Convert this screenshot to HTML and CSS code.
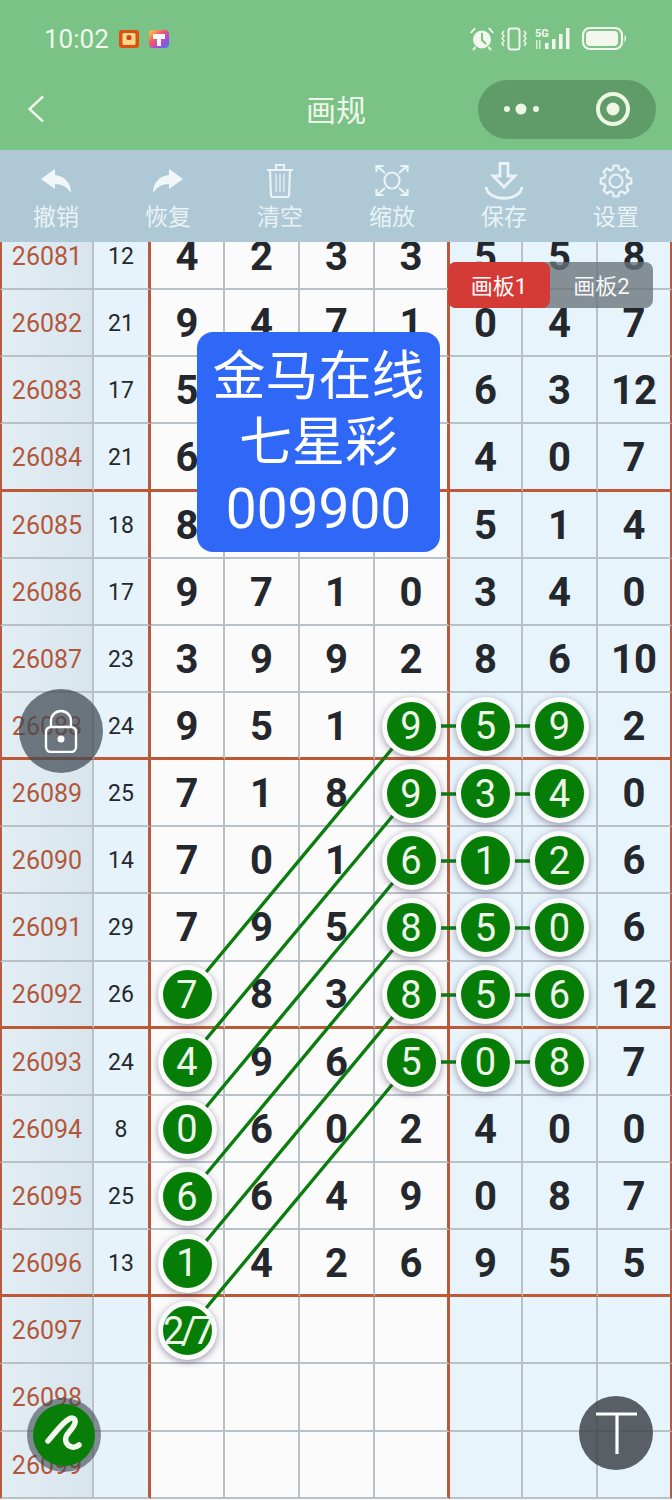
FILE: index.html
```html
<!DOCTYPE html>
<html lang="zh-CN">
<head>
<meta charset="utf-8">
<title>画规</title>
<link rel="stylesheet" href="styles.css">
</head>
<body>
<div class="phone">
  <header class="header">
    <div class="status">
      <span class="time">10:02</span>
      <svg class="app-icon" viewBox="0 0 20 18"><rect width="20" height="18" rx="3" fill="#de4f10"/><rect x="3.5" y="3" width="13" height="12" rx="1.5" fill="#f7d98c"/><circle cx="10" cy="7.5" r="2.6" fill="#d9401a"/></svg>
      <svg class="app-icon" viewBox="0 0 20 18"><defs><linearGradient id="rainbow" x1="0" y1="0" x2="1" y2="1"><stop offset="0" stop-color="#ffd23e"/><stop offset=".4" stop-color="#ef5a6a"/><stop offset=".7" stop-color="#a34be0"/><stop offset="1" stop-color="#3b7cf0"/></linearGradient></defs><rect width="20" height="18" rx="4" fill="url(#rainbow)"/><path d="M4 4h12v5h-4v7H8V9H4z" fill="#fff"/></svg>
      <svg class="status-icons" viewBox="0 0 160 30">
        <g fill="#f2f8ee">
          <circle cx="14" cy="15.5" r="9"/>
          <path d="M3.5 9.5 8 4.5l-1.5-1-4.500 5zM24.500 9.500 20 4.500l1.500-1 4.500 5z"/>
          <path d="M7.500 23 5 26M20.500 23 23 26" stroke="#f2f8ee" stroke-width="2"/>
        </g>
        <path d="M14 9v7l4 4" fill="none" stroke="#7ac285" stroke-width="2"/>
        <g fill="none" stroke="#f2f8ee" stroke-width="2">
          <rect x="40.500" y="4.500" width="11" height="21" rx="2.500"/>
          <path d="M36 7l-2 2.500 2 2.500-2 2.500 2 2.500-2 2.500 2 2.500M56 7l2 2.500-2 2.500 2 2.500-2 2.500 2 2.500-2 2.500" stroke-width="1.500"/>
        </g>
        <text class="five-g" x="67" y="13">5G</text>
        <g fill="#f2f8ee">
          <path d="M68 16h1.500v9H68zM71 16h1.500v9H71z" opacity=".8"/>
          <rect x="77" y="19" width="3.500" height="6"/>
          <rect x="84" y="15" width="3.500" height="10"/>
          <rect x="91" y="10" width="3.500" height="15"/>
          <rect x="98" y="4" width="3.500" height="21"/>
          <rect x="118" y="7" width="32" height="15" rx="4"/>
          <path d="M156.500 11c2 .5 2 6 0 7z"/>
        </g>
        <rect x="115" y="4" width="39" height="21" rx="7" fill="none" stroke="#f2f8ee" stroke-width="2.200"/>
      </svg>
    </div>
    <nav class="nav">
      <svg class="back" viewBox="0 0 18 28"><path d="M16 1.500 2.500 14 16 26.500" fill="none" stroke="#f0f7ea" stroke-width="2.400"/></svg>
      <h1 class="title">画规</h1>
      <div class="capsule">
        <svg class="capsule-dots" viewBox="0 0 40 14"><circle cx="5" cy="7" r="3" fill="#eef6e4"/><circle cx="19" cy="7" r="5.500" fill="#eef6e4"/><circle cx="34" cy="7" r="3" fill="#eef6e4"/></svg>
        <svg class="capsule-target" viewBox="0 0 36 36"><circle cx="18" cy="18" r="15" fill="none" stroke="#eef6e4" stroke-width="4"/><circle cx="18" cy="18" r="6.500" fill="#eef6e4"/></svg>
      </div>
    </nav>
  </header>

  <div class="toolbar">
    <div class="tool">
      <span class="tool-icon"><svg width="32" height="26" viewBox="0 0 32 26"><path class="solid" d="M1 11 15 1v6c10 1 16 8 16 18-4-6-9-9-16-9v5z"/></svg></span>
      <span class="tool-label">撤销</span>
    </div>
    <div class="tool">
      <span class="tool-icon"><svg width="32" height="26" viewBox="0 0 32 26"><path class="solid" d="M31 11 17 1v6C7 8 1 15 1 25c4-6 9-9 16-9v5z"/></svg></span>
      <span class="tool-label">恢复</span>
    </div>
    <div class="tool">
      <span class="tool-icon"><svg width="28" height="35" viewBox="0 0 28 35"><path class="line" d="M1 7h26M10 7V2h8v5M4 7l1 25.500c0 1 1 1.500 2 1.500h14c1 0 2-.5 2-1.500L24 7"/><path class="thin" d="M10 11v18M14 11v18M18 11v18"/></svg></span>
      <span class="tool-label">清空</span>
    </div>
    <div class="tool">
      <span class="tool-icon"><svg width="34" height="33" viewBox="0 0 34 33"><ellipse class="line" cx="17" cy="16.500" rx="7.500" ry="8"/><path class="line" d="M1.500 8V2h7M3 3l7 6M32.500 8V2h-7M31 3l-7 6M1.500 25v6h7M3 30l7-6M32.500 25v6h-7M31 30l-7-6"/></svg></span>
      <span class="tool-label">缩放</span>
    </div>
    <div class="tool">
      <span class="tool-icon"><svg width="40" height="38" viewBox="0 0 40 38"><path class="line line-bold" d="M16 1.500h8V14h7L20 25 9 14h7z"/><path class="line line-bold" d="M2 25c2 15 34 15 36 0"/></svg></span>
      <span class="tool-label">保存</span>
    </div>
    <div class="tool">
      <span class="tool-icon"><svg width="34" height="34" viewBox="-17 -17 34 34"><polygon class="line" points="11.54,-3.31 15.31,-2.42 15.31,2.42 11.54,3.31 10.5,5.82 12.54,9.11 9.11,12.54 5.82,10.5 3.31,11.54 2.42,15.31 -2.42,15.31 -3.31,11.54 -5.82,10.5 -9.11,12.54 -12.54,9.11 -10.5,5.82 -11.54,3.31 -15.31,2.42 -15.31,-2.42 -11.54,-3.31 -10.5,-5.82 -12.54,-9.11 -9.11,-12.54 -5.82,-10.5 -3.31,-11.54 -2.42,-15.31 2.42,-15.31 3.31,-11.54 5.82,-10.5 9.11,-12.54 12.54,-9.11 10.5,-5.82"/><circle class="line" r="6.500"/></svg></span>
      <span class="tool-label">设置</span>
    </div>
  </div>

  <main class="board">
    <div class="sheet">
      <svg class="links" viewBox="0 0 672 1276" aria-hidden="true">
        <path d="M187 772 411 503M187 839 411 571M187 907 411 638M187 974 411 705M187 1041 411 772M187 1108 411 839M411 503H560M411 571H560M411 638H560M411 705H560M411 772H560M411 839H560"/>
      </svg>
      <div class="row"><div class="cell">26081</div><div class="cell">12</div><div class="cell">4</div><div class="cell">2</div><div class="cell">3</div><div class="cell">3</div><div class="cell">5</div><div class="cell">5</div><div class="cell">8</div></div>
      <div class="row"><div class="cell">26082</div><div class="cell">21</div><div class="cell">9</div><div class="cell">4</div><div class="cell">7</div><div class="cell">1</div><div class="cell">0</div><div class="cell">4</div><div class="cell">7</div></div>
      <div class="row"><div class="cell">26083</div><div class="cell">17</div><div class="cell">5</div><div class="cell"></div><div class="cell"></div><div class="cell"></div><div class="cell">6</div><div class="cell">3</div><div class="cell">12</div></div>
      <div class="row row-edge"><div class="cell">26084</div><div class="cell">21</div><div class="cell">6</div><div class="cell"></div><div class="cell"></div><div class="cell"></div><div class="cell">4</div><div class="cell">0</div><div class="cell">7</div></div>
      <div class="row"><div class="cell">26085</div><div class="cell">18</div><div class="cell">8</div><div class="cell"></div><div class="cell"></div><div class="cell"></div><div class="cell">5</div><div class="cell">1</div><div class="cell">4</div></div>
      <div class="row"><div class="cell">26086</div><div class="cell">17</div><div class="cell">9</div><div class="cell">7</div><div class="cell">1</div><div class="cell">0</div><div class="cell">3</div><div class="cell">4</div><div class="cell">0</div></div>
      <div class="row"><div class="cell">26087</div><div class="cell">23</div><div class="cell">3</div><div class="cell">9</div><div class="cell">9</div><div class="cell">2</div><div class="cell">8</div><div class="cell">6</div><div class="cell">10</div></div>
      <div class="row row-edge"><div class="cell">26088</div><div class="cell">24</div><div class="cell">9</div><div class="cell">5</div><div class="cell">1</div><div class="cell"><span class="ball">9</span></div><div class="cell"><span class="ball">5</span></div><div class="cell"><span class="ball">9</span></div><div class="cell">2</div></div>
      <div class="row"><div class="cell">26089</div><div class="cell">25</div><div class="cell">7</div><div class="cell">1</div><div class="cell">8</div><div class="cell"><span class="ball">9</span></div><div class="cell"><span class="ball">3</span></div><div class="cell"><span class="ball">4</span></div><div class="cell">0</div></div>
      <div class="row"><div class="cell">26090</div><div class="cell">14</div><div class="cell">7</div><div class="cell">0</div><div class="cell">1</div><div class="cell"><span class="ball">6</span></div><div class="cell"><span class="ball">1</span></div><div class="cell"><span class="ball">2</span></div><div class="cell">6</div></div>
      <div class="row"><div class="cell">26091</div><div class="cell">29</div><div class="cell">7</div><div class="cell">9</div><div class="cell">5</div><div class="cell"><span class="ball">8</span></div><div class="cell"><span class="ball">5</span></div><div class="cell"><span class="ball">0</span></div><div class="cell">6</div></div>
      <div class="row row-edge"><div class="cell">26092</div><div class="cell">26</div><div class="cell"><span class="ball">7</span></div><div class="cell">8</div><div class="cell">3</div><div class="cell"><span class="ball">8</span></div><div class="cell"><span class="ball">5</span></div><div class="cell"><span class="ball">6</span></div><div class="cell">12</div></div>
      <div class="row"><div class="cell">26093</div><div class="cell">24</div><div class="cell"><span class="ball">4</span></div><div class="cell">9</div><div class="cell">6</div><div class="cell"><span class="ball">5</span></div><div class="cell"><span class="ball">0</span></div><div class="cell"><span class="ball">8</span></div><div class="cell">7</div></div>
      <div class="row"><div class="cell">26094</div><div class="cell">8</div><div class="cell"><span class="ball">0</span></div><div class="cell">6</div><div class="cell">0</div><div class="cell">2</div><div class="cell">4</div><div class="cell">0</div><div class="cell">0</div></div>
      <div class="row"><div class="cell">26095</div><div class="cell">25</div><div class="cell"><span class="ball">6</span></div><div class="cell">6</div><div class="cell">4</div><div class="cell">9</div><div class="cell">0</div><div class="cell">8</div><div class="cell">7</div></div>
      <div class="row row-edge"><div class="cell">26096</div><div class="cell">13</div><div class="cell"><span class="ball">1</span></div><div class="cell">4</div><div class="cell">2</div><div class="cell">6</div><div class="cell">9</div><div class="cell">5</div><div class="cell">5</div></div>
      <div class="row"><div class="cell">26097</div><div class="cell"></div><div class="cell"><span class="ball ball-tight">2/7</span></div><div class="cell"></div><div class="cell"></div><div class="cell"></div><div class="cell"></div><div class="cell"></div><div class="cell"></div></div>
      <div class="row"><div class="cell">26098</div><div class="cell"></div><div class="cell"></div><div class="cell"></div><div class="cell"></div><div class="cell"></div><div class="cell"></div><div class="cell"></div><div class="cell"></div></div>
      <div class="row"><div class="cell">26099</div><div class="cell"></div><div class="cell"></div><div class="cell"></div><div class="cell"></div><div class="cell"></div><div class="cell"></div><div class="cell"></div><div class="cell"></div></div>
    </div>
  </main>

  <div class="promo">金马在线<br>七星彩<br><span class="promo-num">009900</span></div>
  <div class="tabs"><span class="tab tab-on">画板1</span><span class="tab">画板2</span></div>
  <button class="fab fab-lock" aria-label="锁定"><svg width="34" height="44" viewBox="0 0 34 44"><path d="M7 18V12a10 10 0 0 1 20 0v6" fill="none" stroke="#fff" stroke-width="2.400"/><rect x="2" y="18" width="30" height="25" rx="5" fill="none" stroke="#fff" stroke-width="2.400"/><circle cx="17" cy="30" r="3.500" fill="#fff"/></svg></button>
  <button class="fab fab-pen" aria-label="画笔"><svg width="74" height="74" viewBox="0 0 74 74"><circle cx="37" cy="37" r="31" fill="#087d08"/><path d="M21 43C28 35 36 24 42 21 48 18 50 23 46 29 42 35 37 38 39 44 41 49 47 51 52 47" fill="none" stroke="#f2f8ee" stroke-width="5.500" stroke-linecap="round" stroke-linejoin="round"/></svg></button>
  <button class="fab fab-text" aria-label="文字"><svg width="74" height="74" viewBox="0 0 74 74"><path d="M17 18H58M38 18V58" fill="none" stroke="#fff" stroke-width="3.200"/></svg></button>
</div>
</body>
</html>
```
FILE: styles.css
```css
* { box-sizing: border-box; }
html, body { margin: 0; padding: 0; }
body {
  font-family: Roboto, "Noto Sans CJK SC", sans-serif;
  background: #fff;
  overflow: hidden;
}
.phone {
  position: relative;
  width: 672px;
  height: 1500px;
  display: flex;
  flex-direction: column;
  overflow: hidden;
}

/* header */
.header { background: #7ac285; height: 150px; flex: none; }
.status {
  height: 78px;
  padding: 0 44px;
  display: flex;
  align-items: center;
  gap: 10px;
}
.time { font-size: 26px; color: #f0f8ec; }
.app-icon { width: 20px; height: 18px; }
.status-icons { width: 160px; height: 30px; margin-left: auto; }
.five-g { font: 700 11px Roboto, sans-serif; fill: #f2f8ee; }
.nav {
  height: 62px;
  padding: 0 16px;
  display: grid;
  grid-template-columns: 1fr auto 1fr;
  align-items: center;
}
.back { width: 18px; height: 28px; margin-left: 11px; }
.title {
  margin: 0 0 2px;
  font-size: 30px;
  font-weight: 400;
  color: #f0f7ea;
  font-family: "Noto Sans CJK SC", sans-serif;
}
.capsule {
  justify-self: end;
  width: 178px;
  height: 59px;
  border-radius: 30px;
  background: #5f9c69;
  display: flex;
  align-items: center;
  padding: 0 25px 0 24px;
  justify-content: space-between;
}
.capsule-dots { width: 40px; height: 14px; }
.capsule-target { width: 36px; height: 36px; }

/* toolbar */
.toolbar {
  flex: none;
  height: 92px;
  background: #aec8d5;
  display: grid;
  grid-template-columns: repeat(6, 1fr);
  padding-top: 10px;
}
.tool {
  display: flex;
  flex-direction: column;
  align-items: center;
  color: #e9f3f6;
}
.tool-icon {
  height: 41px;
  display: flex;
  align-items: center;
  justify-content: center;
}
.tool-label {
  font: 400 23px/28px "Noto Sans CJK SC", sans-serif;
}
.solid { fill: #f1f7f9; }
.line { fill: none; stroke: #eaf3f6; stroke-width: 2.2; }
.line-bold { stroke-width: 2.8; }
.thin { fill: none; stroke: #eaf3f6; stroke-width: 1.2; }

/* board */
.board { flex: 1; overflow: hidden; background: #fbfbfc; }
.sheet { position: relative; margin-top: -19px; }
.links {
  position: absolute;
  left: 0;
  top: 0;
  width: 672px;
  height: 1276px;
  z-index: 1;
  pointer-events: none;
}
.links path { fill: none; stroke: #0b7d0f; stroke-width: 3.4; }
.row {
  display: grid;
  grid-template-columns: 94px 57px 74px 75px 75px 75px 73px 75px 74px;
  height: 67.15px;
}
.cell {
  display: flex;
  align-items: center;
  justify-content: center;
  padding-top: 2px;
  border-right: 2px solid #b8c1c7;
  border-bottom: 2px solid #b8c1c7;
  background: #fbfbfc;
  color: #24282d;
  font-size: 40px;
  font-weight: 700;
}
.row > :nth-child(1) {
  border-left: 2px solid #b85a40;
  background: linear-gradient(90deg, #e2edf4, #d9e5ed);
  color: #b3573a;
  font-size: 25px;
  font-weight: 400;
}
.row > :nth-child(2) {
  background: #e7f3fb;
  border-right: 3px solid #b85a3a;
  font-size: 23px;
  font-weight: 400;
}
.row > :nth-child(6) { border-right: 3px solid #b85a3a; }
.row > :nth-child(n+7) { background: #e7f4fc; }
.row > :nth-child(9) { border-right-color: #b85a40; }
.row-edge .cell { border-bottom: 3px solid #bd5a36; }

.ball {
  position: relative;
  z-index: 2;
  width: 59px;
  height: 59px;
  flex: none;
  display: flex;
  align-items: center;
  justify-content: center;
  border: 5.5px solid #fafcfa;
  border-radius: 50%;
  background: #067d06;
  box-shadow: 0 2px 7px rgba(70, 50, 90, .5);
  color: #eef8ea;
  font-size: 38px;
  font-weight: 400;
}
.ball-tight { letter-spacing: -3.5px; white-space: nowrap; }

/* floating */
.promo {
  position: absolute;
  left: 197px;
  top: 332px;
  width: 243px;
  height: 220px;
  padding-top: 12px;
  border-radius: 16px;
  background: #2f68f6;
  color: #fff;
  text-align: center;
  font-size: 53px;
  line-height: 66px;
}
.promo-num { font-size: 55px; }
.tabs {
  position: absolute;
  left: 448px;
  top: 262px;
  display: flex;
  border-radius: 8px;
  background: rgba(104, 114, 120, .78);
}
.tab {
  width: 102px;
  height: 46px;
  padding-bottom: 3px;
  display: flex;
  align-items: center;
  justify-content: center;
  border-radius: 8px;
  color: #f6f6f6;
  font-size: 22px;
}
.tab-on { width: 102px; background: #d43a36; color: #fff; }
.tab + .tab { width: 103px; }
.fab {
  position: absolute;
  width: 74px;
  height: 74px;
  padding: 0;
  border: 0;
  border-radius: 50%;
  display: flex;
  align-items: center;
  justify-content: center;
}
.fab-lock {
  left: 19px;
  top: 689px;
  width: 84px;
  height: 84px;
  background: rgba(62, 72, 82, .72);
}
.fab-pen { left: 27px; top: 1398px; background: rgba(60, 70, 80, .6); }
.fab-text { left: 579px; top: 1396px; background: rgba(62, 68, 74, .85); }
```
